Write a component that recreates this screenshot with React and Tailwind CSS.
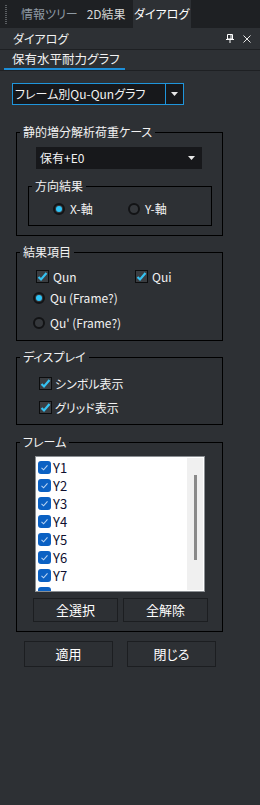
import React from "react";

const font = { fontFamily: '"Noto Sans CJK JP", "Noto Sans", sans-serif' };

function DarkCheck() {
  return (
    <span className="flex h-[13px] w-[13px] shrink-0 items-center justify-center border border-[#0c0d0e] bg-[#3a3d41]">
      <svg width="11" height="11" viewBox="0 0 11 11">
        <path d="M1.5 6 L4 8.5 L9.5 2" fill="none" stroke="#35c2f2" strokeWidth="2.2" />
      </svg>
    </span>
  );
}

function Radio({ on }) {
  return (
    <span className="flex h-[12px] w-[12px] shrink-0 items-center justify-center rounded-full border-2 border-[#121315] bg-[#35383c]">
      {on && <span className="h-[6px] w-[6px] rounded-full bg-[#2ec4f6]" />}
    </span>
  );
}

function Arrow() {
  return (
    <svg width="7" height="4" viewBox="0 0 7 4">
      <path d="M0 0 H7 L3.5 4 Z" fill="#e8e8e8" />
    </svg>
  );
}

function BlueCheck() {
  return (
    <span className="flex h-[13px] w-[13px] shrink-0 items-center justify-center rounded-[3px] bg-[#0b61c3]">
      <svg width="9" height="9" viewBox="0 0 9 9">
        <path d="M1.5 4.8 L3.6 6.8 L7.5 2.4" fill="none" stroke="#b9d4f2" strokeWidth="1.1" />
      </svg>
    </span>
  );
}

function Legend({ children }) {
  return <legend className="ml-[3px] px-[3px] text-[12px] leading-[16px] text-[#f2f2f2]">{children}</legend>;
}

export default function App() {
  const frames = ["Y1", "Y2", "Y3", "Y4", "Y5", "Y6", "Y7"];
  return (
    <div style={font} className="flex h-[805px] w-[260px] flex-col bg-[#2d3034] text-[#f2f2f2] [font-feature-settings:'palt']">
      {/* tab bar */}
      <div className="flex h-[28px] items-stretch bg-[#1e2023]">
        <div className="ml-[5px] mr-[14px] mt-[5px] h-[20px] w-[2px] bg-[repeating-linear-gradient(to_bottom,#5a5e62_0px,#5a5e62_1px,transparent_1px,transparent_2px)]" />
        <div className="flex items-center text-[12px] text-[#8f9aa3]">情報ツリー</div>
        <div className="ml-[9px] flex items-center text-[12px] text-[#d6d6d6]">2D結果</div>
        <div className="ml-[7px] flex w-[58px] items-center justify-center bg-[#2d3034] text-[12px] text-white">ダイアログ</div>
      </div>
      {/* header */}
      <div className="flex h-[22px] items-center justify-between border-b border-[#1e2023] pl-[13px] pr-[9px]">
        <span className="text-[12px] leading-none">ダイアログ</span>
        <div className="flex items-center gap-[9px]">
          <svg width="8" height="9" viewBox="0 0 8 9">
            <path d="M1.5 0.5 H6.5 V5 H1.5 Z" fill="none" stroke="#fff" strokeWidth="1" />
            <path d="M0 5.5 H8" stroke="#fff" strokeWidth="1" />
            <path d="M4 5.5 V9" stroke="#fff" strokeWidth="1" />
            <path d="M5 1 V5" stroke="#fff" strokeWidth="1" />
          </svg>
          <svg width="8" height="8" viewBox="0 0 8 8">
            <path d="M0.5 0.5 L7.5 7.5 M7.5 0.5 L0.5 7.5" stroke="#e8e8e8" strokeWidth="1" />
          </svg>
        </div>
      </div>
      {/* page tab */}
      <div className="flex h-[21px] border-b border-[#1e2023]">
        <div className="ml-[4px] flex w-[121px] flex-col justify-end">
          <span className="pl-[8px] text-[12.5px] leading-[16px]">保有水平耐力グラフ</span>
          <div className="mt-[1px] h-[2px] bg-[#1c8ed8]" />
        </div>
      </div>

      {/* combobox */}
      <div className="ml-[12px] mt-[12px] flex h-[22px] w-[172px] items-stretch border border-[#1f95db] bg-[#17181b]">
        <span className="flex flex-1 items-center pl-[2px] text-[12px]">フレーム別Qu-Qunグラフ</span>
        <span className="flex w-[18px] items-center justify-center border-l border-[#1f95db]">
          <Arrow />
        </span>
      </div>

      {/* group 1 */}
      <fieldset className="ml-[16px] mt-[19px] h-[112px] w-[207px] border border-black">
        <Legend>静的増分解析荷重ケース</Legend>
        <div className="ml-[19px] mt-[7px] flex h-[22px] w-[166px] items-center justify-between bg-[#17181b] pl-[4px] pr-[7px]">
          <span className="text-[12px]">保有+E0</span>
          <Arrow />
        </div>
        <fieldset className="ml-[11px] mt-[9px] h-[48px] w-[184px] border border-black">
          <Legend>方向結果</Legend>
          <div className="ml-[24px] mt-[9px] flex items-center">
            <Radio on />
            <span className="ml-[5px] w-[58px] text-[12px] leading-[12px]">X-軸</span>
            <Radio />
            <span className="ml-[5px] text-[12px] leading-[12px]">Y-軸</span>
          </div>
        </fieldset>
      </fieldset>

      {/* group 2 */}
      <fieldset className="ml-[16px] mt-[8px] h-[97px] w-[207px] border border-black">
        <Legend>結果項目</Legend>
        <div className="ml-[19px] mt-[10px] flex items-center">
          <DarkCheck />
          <span className="ml-[4px] w-[82px] text-[12px] leading-[13px]">Qun</span>
          <DarkCheck />
          <span className="ml-[4px] text-[12px] leading-[13px]">Qui</span>
        </div>
        <div className="ml-[16px] mt-[9px] flex items-center">
          <Radio on />
          <span className="ml-[5px] text-[12px] leading-[12px]">Qu (Frame?)</span>
        </div>
        <div className="ml-[16px] mt-[13px] flex items-center">
          <Radio />
          <span className="ml-[5px] text-[12px] leading-[12px]">Qu' (Frame?)</span>
        </div>
      </fieldset>

      {/* group 3 */}
      <fieldset className="ml-[16px] mt-[8px] h-[76px] w-[207px] border border-black">
        <Legend>ディスプレイ</Legend>
        <div className="ml-[22px] mt-[12px] flex items-center">
          <DarkCheck />
          <span className="ml-[3px] text-[12px] leading-[13px]">シンボル表示</span>
        </div>
        <div className="ml-[22px] mt-[11px] flex items-center">
          <DarkCheck />
          <span className="ml-[3px] text-[12px] leading-[13px]">グリッド表示</span>
        </div>
      </fieldset>

      {/* group 4 */}
      <fieldset className="ml-[16px] mt-[9px] h-[198px] w-[207px] border border-black">
        <Legend>フレーム</Legend>
        <div className="ml-[18px] mt-[6px] flex h-[136px] w-[170px] border border-[#8b8f93] bg-white">
          <div className="flex flex-1 flex-col overflow-hidden pl-[2px] pt-[4px]">
            {frames.map((f) => (
              <div key={f} className="flex h-[18px] shrink-0 items-start">
                <BlueCheck />
                <span className="ml-[2px] text-[13px] leading-[14px] text-[#101030]">{f}</span>
              </div>
            ))}
            <div className="flex h-[18px] shrink-0 items-start">
              <BlueCheck />
            </div>
          </div>
          <div className="my-[1px] mr-[1px] flex w-[16px] justify-center bg-[#f0f0f0] pt-[17px]">
            <div className="h-[85px] w-[3px] bg-[#8a8a8a]" />
          </div>
        </div>
        <div className="ml-[16px] mt-[6px] flex gap-[5px]">
          <button className="flex h-[24px] w-[85px] items-center justify-center border border-[#1c1e21] bg-[#2d3034] text-[13px] text-white">全選択</button>
          <button className="flex h-[24px] w-[85px] items-center justify-center border border-[#1c1e21] bg-[#2d3034] text-[13px] text-white">全解除</button>
        </div>
      </fieldset>

      {/* bottom buttons */}
      <div className="ml-[24px] mt-[9px] flex gap-[14px]">
        <button className="flex h-[26px] w-[89px] items-center justify-center border border-[#1c1e21] bg-[#2d3034] text-[13px] text-white">適用</button>
        <button className="flex h-[26px] w-[89px] items-center justify-center border border-[#1c1e21] bg-[#2d3034] text-[13px] text-white">閉じる</button>
      </div>
    </div>
  );
}
